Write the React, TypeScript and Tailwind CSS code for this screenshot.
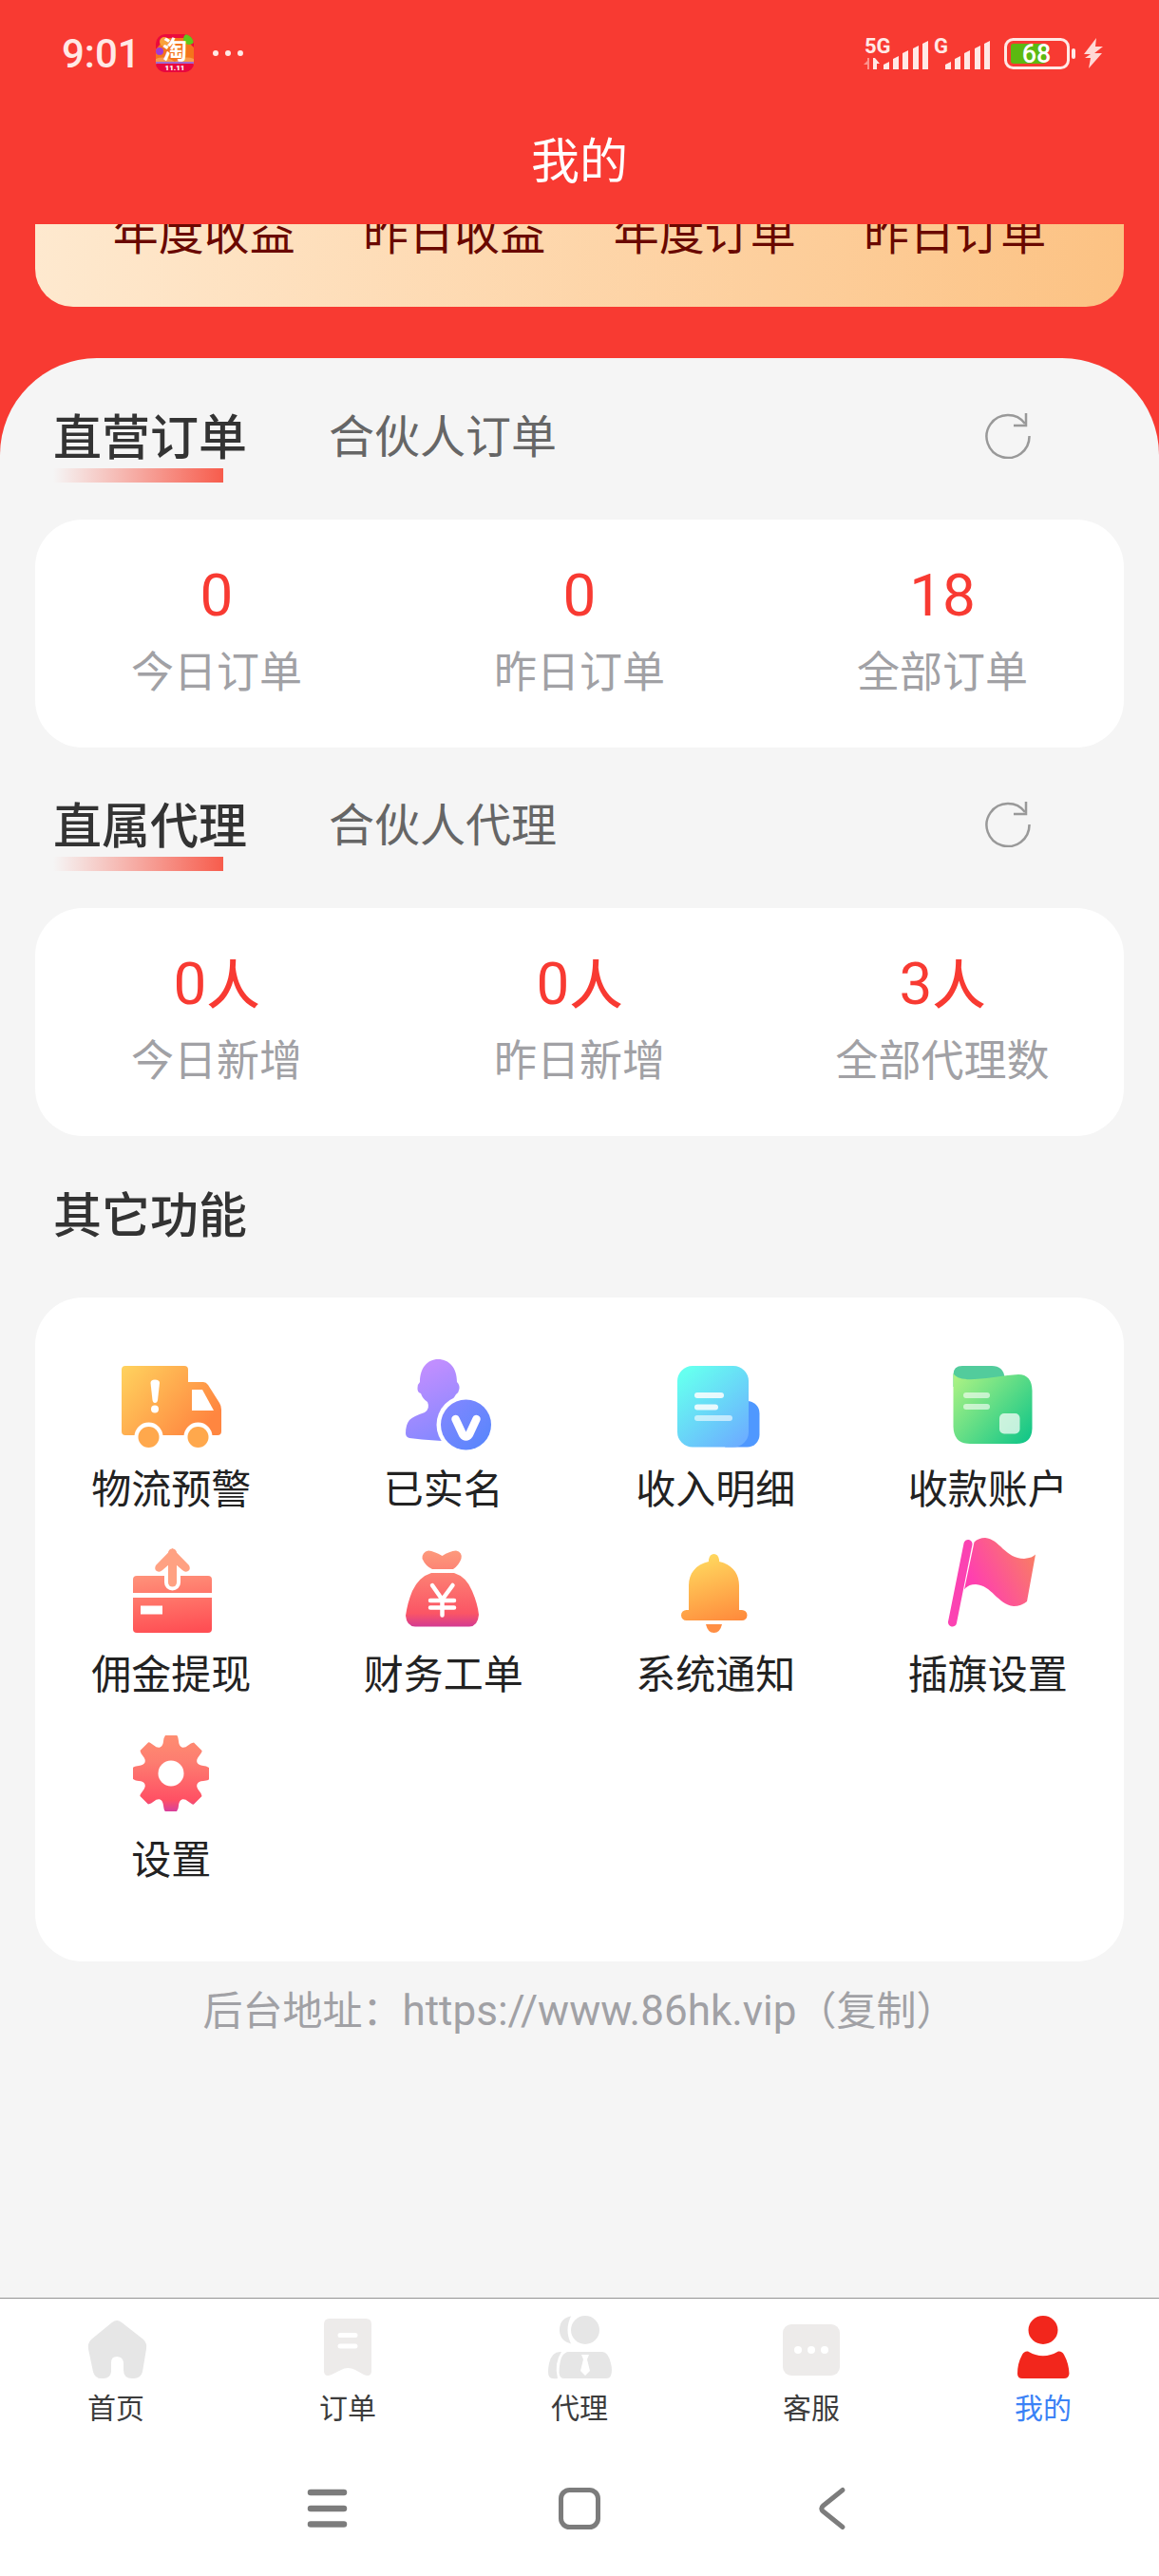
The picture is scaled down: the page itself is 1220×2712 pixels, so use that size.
import type { ReactNode } from 'react'
import clsx from 'clsx'

// ---------- status bar ----------

const TaobaoIcon = () => (
  <svg viewBox="0 0 40 40" className="size-10 overflow-visible">
    <defs>
      <clipPath id="tb-clip">
        <rect width="40" height="40" rx="10" />
      </clipPath>
    </defs>
    <g clipPath="url(#tb-clip)">
      <rect width="40" height="40" fill="#ec0a3c" />
      <path d="M0 16 L10 4 L30 4 L40 14 V30 H0 Z" fill="#f4741c" />
      <circle cx="9" cy="8" r="5" fill="#f9a23a" />
      <circle cx="35" cy="5" r="6" fill="#5fc71b" />
      <circle cx="4" cy="18" r="4" fill="#a03ad6" />
      <path d="M0 26 Q10 22 20 29 Q30 22 40 26 V32 H0 Z" fill="#f99a4c" />
      <rect y="29" width="40" height="3" fill="#a06ad0" />
      <rect y="31" width="40" height="9" fill="#e8063f" />
    </g>
    <text x="20" y="26" textAnchor="middle" fontSize="26" fontWeight="700" fill="#fff">
      淘
    </text>
    <text x="20" y="38" textAnchor="middle" fontSize="8" fontWeight="900" fill="#fff">
      11.11
    </text>
  </svg>
)

const SignalIcon = () => (
  <svg viewBox="0 0 134 36" className="h-9 w-[134px] overflow-visible" fill="#ffe9e6">
    <text x="1" y="18" fontSize="22" fontWeight="700">
      5G
    </text>
    <path d="M6 23v12H4v-5H0l4-4v-3z" opacity=".5" />
    <path d="M10 23h2l5 6h-3v6h-4z" />
    <path d="M21 35v-5l6-3v8zM31 35V24l6-3v14zM41 35V18l6-3v20zM52 35V13l6-3v25zM62 35V8l6-3v30z" />
    <text x="74" y="18" fontSize="22" fontWeight="700">
      G
    </text>
    <path d="M86 35v-5l6-3v8zM96 35V24l6-3v14zM106 35V18l6-3v20zM117 35V13l6-3v25zM127 35V8l6-3v30z" />
  </svg>
)

const BatteryIcon = () => (
  <svg viewBox="0 0 76 36" className="h-9 w-[76px] overflow-visible">
    <rect x="7" y="8" width="37" height="21" rx="3" fill="#5cb911" />
    <rect x="1.5" y="3.5" width="66" height="30" rx="8" fill="none" stroke="#ffe9e6" strokeWidth="3" />
    <rect x="71" y="13" width="4" height="11" rx="2" fill="#ffe9e6" />
    <text x="34" y="28" textAnchor="middle" fontSize="27" fontWeight="500" fill="#fff">
      68
    </text>
  </svg>
)

const BoltIcon = () => (
  <svg viewBox="0 0 22 34" className="h-[34px] w-[22px]" fill="#ffd9d6">
    <path d="M14 1 L1 18 H8 L2 22 H8 L6 33 L20 17 H12 L21 10 H13 Z" />
  </svg>
)

const StatusBar = () => (
  <div className="flex h-28 items-center pr-[58px] pl-[65px] text-[#ffe9e6]">
    <span className="text-[42px] font-medium">9:01</span>
    <div className="ml-4 flex items-center gap-5">
      <TaobaoIcon />
      <div className="flex gap-[7px]">
        <i className="size-[6px] rounded-full bg-current" />
        <i className="size-[6px] rounded-full bg-current" />
        <i className="size-[6px] rounded-full bg-current" />
      </div>
    </div>
    <div className="ml-auto flex items-center">
      <SignalIcon />
      <div className="ml-[14px] flex items-center gap-[7px]">
        <BatteryIcon />
        <BoltIcon />
      </div>
    </div>
  </div>
)

// ---------- content ----------

const RefreshIcon = () => (
  <svg viewBox="0 0 48 48" className="size-12" fill="none" stroke="#999" strokeWidth="2.5">
    <path d="M46.500 24 A22.500 22.500 0 1 1 42 11" />
    <path d="M43 0 V13 H30" />
  </svg>
)

type Stat = { value: string; unit?: string; label: string }

const StatCard = ({ stats }: { stats: Stat[] }) => (
  <div className="mx-[37px] grid grid-cols-3 rounded-[50px] bg-white pt-[45px] pb-[47px] text-center">
    {stats.map(s => (
      <div key={s.label}>
        <div className="h-[70px] leading-[70px] text-[#f83a32]">
          <span className="text-[62px]">{s.value}</span>
          {s.unit && <span className="text-[56px] font-medium">{s.unit}</span>}
        </div>
        <div className="mt-4 text-[45px] leading-[62px] text-[#a1a1a5]">{s.label}</div>
      </div>
    ))}
  </div>
)

const SectionTabs = ({ active, other }: { active: string; other: string }) => (
  <div className="flex h-[169px] items-start pt-[53px] pr-[135px] pl-[56px]">
    <button className="text-[51px] leading-[62px] font-medium text-[#333]">
      {active}
      <span className="block h-[15px] w-[179px] bg-gradient-to-r from-[#f75c4c]/0 to-[#f75c4c]" />
    </button>
    <button className="ml-[86px] text-[48px] leading-[60px] text-[#666]">{other}</button>
    <button className="mt-1 ml-auto" aria-label="刷新">
      <RefreshIcon />
    </button>
  </div>
)

// ---------- feature icons, all on a 120 x 120 grid ----------

const TruckIcon = () => (
  <>
    <defs>
      <linearGradient id="truck" x1="0" y1="0" x2="1" y2=".6">
        <stop offset="0" stopColor="#ffd35e" />
        <stop offset="1" stopColor="#ff8640" />
      </linearGradient>
    </defs>
    <path
      d="M12 18 H74 Q78 18 78 22 V35 H94 Q97 35 99 38 L111 57 Q113 60 113 64 V87 Q113 91 109 91 H12 Q8 91 8 87 V22 Q8 18 12 18 Z"
      fill="url(#truck)"
    />
    <path d="M82 43 H93 L105 65 H82 Z" fill="#fff" />
    <path d="M38.500 36 Q38.500 32.500 43 32.500 Q48 32.500 48 36 L46 54 Q45.500 57 43 57 Q41 57 40.500 54 Z" fill="#fff" />
    <circle cx="43" cy="63.500" r="4" fill="#fff" />
    <circle cx="36.500" cy="92.500" r="15" fill="#fff" />
    <circle cx="88.500" cy="92.500" r="15" fill="#fff" />
    <circle cx="36.500" cy="93" r="11" fill="#ffa84c" />
    <circle cx="88.500" cy="93" r="11" fill="#ffa84c" />
  </>
)

const VerifiedIcon = () => (
  <>
    <defs>
      <linearGradient id="person" x1=".3" y1="0" x2=".6" y2="1">
        <stop offset=".1" stopColor="#c08eff" />
        <stop offset="1" stopColor="#8488ff" />
      </linearGradient>
      <linearGradient id="badge" x1="0" y1="0" x2="1" y2="1">
        <stop offset="0" stopColor="#8587ff" />
        <stop offset="1" stopColor="#5486fc" />
      </linearGradient>
    </defs>
    <path
      d="M54 11 C66 11 74 20 74 35 Q77 38 76.500 42 Q76 46 73 48 Q70 54 65 58 V64 Q66 68 80 72 V98 Q50 97 24 94 Q20 93 20 89 Q20 80 24 75 Q28 71 40 67 Q46 63 43 56 Q38 53 36 47 Q32 46 32.500 41 Q32 38 35 35 C35 20 43 11 54 11 Z"
      fill="url(#person)"
    />
    <circle cx="83.500" cy="80" r="31" fill="#fff" />
    <circle cx="83.500" cy="80" r="26.500" fill="url(#badge)" />
    <path d="M72.500 74 L80 90 Q83.500 95 87 90 L94.500 74" fill="none" stroke="#fff" strokeWidth="8.500" strokeLinecap="round" />
  </>
)

const IncomeIcon = () => (
  <>
    <defs>
      <linearGradient id="income" x1=".1" y1=".1" x2=".8" y2="1">
        <stop offset="0" stopColor="#66fff0" />
        <stop offset="1" stopColor="#6cb0ff" />
      </linearGradient>
    </defs>
    <rect x="60" y="55" width="46.500" height="48.500" rx="13" fill="#4f98ff" />
    <rect x="20" y="18" width="75" height="85.500" rx="16" fill="url(#income)" />
    <g stroke="#fff" strokeWidth="6" strokeLinecap="round">
      <path d="M41 49 H66" opacity=".85" />
      <path d="M41 61.500 H60" opacity=".85" />
      <path d="M41 73 H75" opacity=".6" />
    </g>
  </>
)

const AccountIcon = () => (
  <>
    <defs>
      <linearGradient id="account" x1="0" y1=".1" x2="1" y2=".9">
        <stop offset="0" stopColor="#aaf284" />
        <stop offset="1" stopColor="#12c688" />
      </linearGradient>
    </defs>
    <path d="M23.500 27 Q23.500 18 33 18 H64 Q76 18 77.500 30 V40 H23.500 Z" fill="#52cc9c" />
    <path
      d="M23.500 26 Q27 33 46 32 C64 31 76 28 92 27 Q106 27 106.500 44 V84 Q106 100 90 100 H41 Q24 100 23.500 82 Z"
      fill="url(#account)"
    />
    <path d="M37 49 H59 M37 61 H59" stroke="#fff" strokeWidth="6" strokeLinecap="round" opacity=".6" />
    <rect x="72" y="68" width="21.500" height="21.500" rx="5" fill="#fff" opacity=".72" />
  </>
)

const WithdrawIcon = () => (
  <>
    <defs>
      <linearGradient id="withdraw" gradientUnits="userSpaceOnUse" x1="50" y1="15" x2="60" y2="104">
        <stop offset=".1" stopColor="#ffa484" />
        <stop offset="1" stopColor="#ff4f54" />
      </linearGradient>
    </defs>
    <path d="M24 44 H99 Q103 44 103 48 V62 H20 V48 Q20 44 24 44 Z" fill="url(#withdraw)" />
    <path d="M20 67 H103 V100 Q103 104 99 104 H24 Q20 104 20 100 Z" fill="url(#withdraw)" />
    <rect x="28" y="75.500" width="23" height="9" fill="#fff" />
    <path d="M61.500 40 V51" stroke="#fff" strokeWidth="17" strokeLinecap="round" />
    <path d="M61.500 20 V51" stroke="#ffa182" strokeWidth="9" strokeLinecap="round" />
    <path d="M61.500 15 L79 33 Q81 37 78 39 Q75 41 72 38 L61.500 29 L51 38 Q48 41 45 39 Q42 37 44 33 Z" fill="#ffa182" />
  </>
)

const MoneyBagIcon = () => (
  <>
    <defs>
      <linearGradient id="bag" gradientUnits="userSpaceOnUse" x1="58" y1="17" x2="58" y2="98">
        <stop offset="0" stopColor="#fd9a7c" />
        <stop offset=".82" stopColor="#fb5565" />
        <stop offset="1" stopColor="#d23a94" />
      </linearGradient>
    </defs>
    <path
      d="M44 17.500 Q50 18 58.500 23 Q66 18 73 17.500 Q80 19 78.500 26 Q76 33 70 37 H48 Q41 34 37.500 26 Q37 19 44 17.500 Z"
      fill="url(#bag)"
    />
    <path d="M47 41 H71 Q84 45 90 60 Q96 74 97 85 Q96 97 87 97.500 H30 Q21 97 20 86 Q22 72 27 60 Q34 45 47 41 Z" fill="url(#bag)" />
    <path
      d="M48 54 L58.500 69 L69.500 54 M58.500 69 V85.500 M46 70 H71 M46 77.500 H71"
      fill="none"
      stroke="#fff"
      strokeWidth="4.500"
      strokeLinecap="round"
    />
  </>
)

const BellIcon = () => (
  <>
    <defs>
      <linearGradient id="bell" gradientUnits="userSpaceOnUse" x1="45" y1="21" x2="70" y2="104">
        <stop offset="0" stopColor="#ffdb60" />
        <stop offset="1" stopColor="#ff8238" />
      </linearGradient>
    </defs>
    <path
      d="M53 27 Q54 21 58.500 21 Q63 21 64 27 V29 C78 32 85 42 85 54 V80 H88 A5.500 5.500 0 0 1 88 91 H29.500 A5.500 5.500 0 0 1 29.500 80 H32 V54 C32 42 39 32 53 29 Z"
      fill="url(#bell)"
    />
    <path d="M50 95 H67 Q65 104 58.500 104 Q52 104 50 95 Z" fill="#ff8f45" />
  </>
)

const FlagIcon = () => (
  <>
    <defs>
      <linearGradient id="flag" x1=".2" y1=".8" x2="1" y2=".4">
        <stop offset="0" stopColor="#ff3fb0" />
        <stop offset="1" stopColor="#f97a68" />
      </linearGradient>
    </defs>
    <path d="M39 10.500 L22.500 93" stroke="#fb42b2" strokeWidth="9" strokeLinecap="round" />
    <path
      d="M45.500 8.500 Q50 4 57 4 C72 5 78 26 98 26 Q107 25 110 21.500 L101 71 Q95 76 87 76 C70 74 64 54 47 53 Q39 53 35 58.500 Z"
      fill="url(#flag)"
    />
  </>
)

const spin = (x: number, y: number, deg: number) => {
  const a = (deg * Math.PI) / 180
  const px = 60 + x * Math.cos(a) - y * Math.sin(a)
  const py = 57 + x * Math.sin(a) + y * Math.cos(a)
  return `${px.toFixed(1)} ${py.toFixed(1)}`
}

// one tooth plus the hollow after it, repeated every 45 degrees
const gearPath =
  [0, 45, 90, 135, 180, 225, 270, 315]
    .map(
      (d, i) =>
        `${i ? 'L' : 'M'}${spin(-6, -40, d)} L${spin(6, -40, d)} Q${spin(7, -40, d)} ${spin(7.5, -37, d)} L${spin(8, -34, d)} ` +
        `C${spin(8.5, -27, d)} ${spin(-8.5, -27, d + 45)} ${spin(-8, -34, d + 45)} L${spin(-7.5, -37, d + 45)}`
    )
    .join(' ') + 'Z'

const GearIcon = () => (
  <>
    <defs>
      <linearGradient id="gear" x1="0" y1="0" x2="0" y2="1">
        <stop offset="0" stopColor="#fe8d72" />
        <stop offset=".35" stopColor="#fd7d70" />
        <stop offset=".85" stopColor="#ff5064" />
        <stop offset="1" stopColor="#d8409c" />
      </linearGradient>
    </defs>
    <path d={gearPath} fill="url(#gear)" />
    <circle cx="60" cy="57" r="13.500" fill="#fff" />
  </>
)

const features: { label: string; icon: ReactNode }[] = [
  { label: '物流预警', icon: <TruckIcon /> },
  { label: '已实名', icon: <VerifiedIcon /> },
  { label: '收入明细', icon: <IncomeIcon /> },
  { label: '收款账户', icon: <AccountIcon /> },
  { label: '佣金提现', icon: <WithdrawIcon /> },
  { label: '财务工单', icon: <MoneyBagIcon /> },
  { label: '系统通知', icon: <BellIcon /> },
  { label: '插旗设置', icon: <FlagIcon /> },
  { label: '设置', icon: <GearIcon /> }
]

// ---------- bottom bar, icons on a 72 x 72 grid ----------

const tabs: { label: string; active?: boolean; icon: ReactNode }[] = [
  {
    label: '首页',
    icon: (
      <path
        d="M32 9 Q37 5 42 9 L65 27 Q69 31 68 37 L64 61 Q62 68 55 68 Q44 69 44 59 V51 Q43 45 37 45 Q31 45 31 51 V61 Q30 68 23 68 Q14 69 12 61 L7 37 Q6 31 10 27 Z"
        fill="#e6e6e6"
      />
    )
  },
  {
    label: '订单',
    icon: (
      <>
        <path d="M17 5 H55 Q61 5 61 11 V61 Q60 67 53 64 L44 59 Q36 55 29 59 L19 64 Q12 67 11 61 V11 Q11 5 17 5 Z" fill="#edebea" />
        <path d="M28 22.500 H44 M28 34 H44" stroke="#fff" strokeWidth="5" strokeLinecap="round" />
      </>
    )
  },
  {
    label: '代理',
    icon: (
      <>
        <path d="M29 2 Q15 4 15 17 Q15 29 29 32 Q21 17 29 2 Z" fill="#e6e6e6" />
        <ellipse cx="42" cy="17" rx="15" ry="15" fill="#e6e6e6" />
        <path d="M17 40 Q7 39 4 52 Q2 62 4 66 Q6 69 13 68 Q9 52 17 40 Z" fill="#e6e6e6" />
        <path d="M25 40 H60 Q66 40 69 52 Q71 60 69 65 Q68 68 64 68 H20 Q15 68 14.500 62 Q15 40 25 40 Z" fill="#e6e6e6" />
        <path d="M38 43 H46 L44 48 L47 60 L42 65 L37 60 L40 48 Z" fill="#fff" />
        <path d="M29 2 Q21 17 29 32" fill="none" stroke="#fff" strokeWidth="3" />
      </>
    )
  },
  {
    label: '客服',
    icon: (
      <>
        <rect x="6" y="11" width="60" height="54" rx="9" fill="#edebea" />
        <circle cx="22" cy="38" r="4" fill="#fff" />
        <circle cx="36" cy="38" r="4" fill="#fff" />
        <circle cx="50" cy="38" r="4" fill="#fff" />
      </>
    )
  },
  {
    label: '我的',
    active: true,
    icon: (
      <>
        <ellipse cx="36" cy="17" rx="15.500" ry="15" fill="#f2261c" />
        <path d="M20 39.500 Q36 49 52 39.500 Q56 39 58 43 Q63 52 63.500 63 Q63 68 58 68 H14 Q9 68 9 63 Q9 52 14 43 Q16 39 20 39.500 Z" fill="#f2261c" />
      </>
    )
  }
]

const App = () => {
  return (
    <div className="flex min-h-screen flex-col bg-[#f83a32] font-['Roboto','Noto_Sans_CJK_SC',sans-serif]">
      <header className="h-[236px]">
        <StatusBar />
        <h1 className="text-center text-[51px] leading-[118px] text-white">我的</h1>
      </header>

      <main className="flex flex-1 flex-col">
        {/* scrolled half under the title bar */}
        <div className="flex h-[87px] items-end overflow-hidden px-[37px]">
          <div className="grid h-[180px] flex-1 grid-cols-4 items-end rounded-[40px] bg-gradient-to-r from-[#fee9cf] to-[#fcc283] px-[46px] pb-[47px] text-center text-[48px] leading-[58px] text-[#6a0800]">
            <span>年度收益</span>
            <span>昨日收益</span>
            <span>年度订单</span>
            <span>昨日订单</span>
          </div>
        </div>

        <div className="mt-[54px] flex-1 rounded-t-[102px] bg-[#f5f5f5] pt-px pb-10">
          <SectionTabs active="直营订单" other="合伙人订单" />
          <StatCard
            stats={[
              { value: '0', label: '今日订单' },
              { value: '0', label: '昨日订单' },
              { value: '18', label: '全部订单' }
            ]}
          />

          <SectionTabs active="直属代理" other="合伙人代理" />
          <StatCard
            stats={[
              { value: '0', unit: '人', label: '今日新增' },
              { value: '0', unit: '人', label: '昨日新增' },
              { value: '3', unit: '人', label: '全部代理数' }
            ]}
          />

          <h2 className="h-[170px] pt-[54px] pl-[56px] text-[51px] leading-[62px] font-medium text-[#333]">其它功能</h2>
          <div className="mx-[37px] grid grid-cols-4 gap-y-[17px] rounded-[50px] bg-white pt-[54px] pb-[77px]">
            {features.map(f => (
              <button key={f.label} className="flex flex-col items-center text-[42px] leading-[58px] text-[#222]">
                <svg viewBox="0 0 120 120" className="size-[120px]">
                  {f.icon}
                </svg>
                {f.label}
              </button>
            ))}
          </div>

          <p className="mt-[22px] text-center text-[42px] leading-[60px] text-[#a1a1a5]">
            后台地址：
            <a href="https://www.86hk.vip" className="text-[44px]">
              https://www.86hk.vip
            </a>
            <button>（复制）</button>
          </p>
        </div>
      </main>

      <footer className="border-t border-[#939393] bg-white">
        <nav className="grid grid-cols-5 pt-4">
          {tabs.map(t => (
            <a
              key={t.label}
              href="#"
              className={clsx('flex flex-col items-center text-[30px] leading-[56px]', t.active ? 'text-[#3b82f6]' : 'text-[#3c3c3c]')}
            >
              <svg viewBox="0 0 72 72" className="size-[72px]">
                {t.icon}
              </svg>
              {t.label}
            </a>
          ))}
        </nav>
        <div className="flex h-[148px] items-center justify-center gap-[206px] pt-[6px] text-[#7c7c7c]">
          <button aria-label="菜单">
            <svg viewBox="0 0 60 60" className="size-[60px]" fill="none" stroke="currentColor" strokeWidth="6.500" strokeLinecap="round">
              <path d="M13 13 H48 M13 30 H48 M13 46.500 H48" />
            </svg>
          </button>
          <button aria-label="主屏幕">
            <svg viewBox="0 0 60 60" className="size-[60px]" fill="none" stroke="currentColor" strokeWidth="5">
              <rect x="10.500" y="10.500" width="39" height="39" rx="9" />
            </svg>
          </button>
          <button aria-label="返回">
            <svg viewBox="0 0 60 60" className="size-[60px]" fill="none" stroke="currentColor" strokeWidth="5" strokeLinecap="round">
              <path d="M41 10.500 L20.500 27 Q17 30 20.500 33 L41 49.500" />
            </svg>
          </button>
        </div>
      </footer>
    </div>
  )
}

export default App
